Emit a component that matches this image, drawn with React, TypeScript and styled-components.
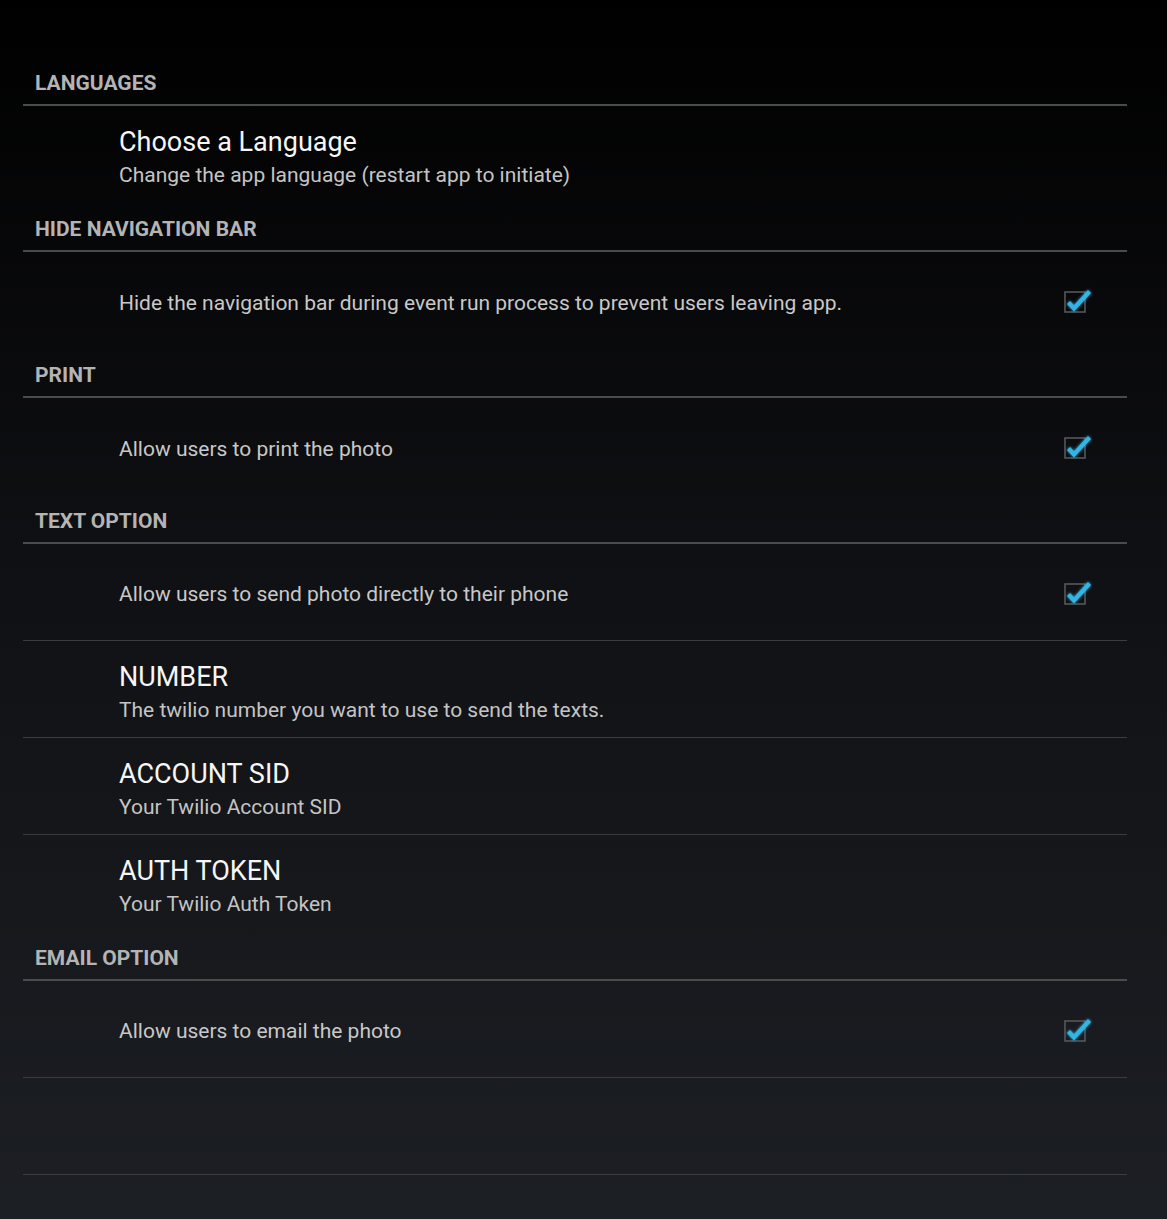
import React from 'react';
import styled, { createGlobalStyle } from 'styled-components';

const GlobalStyle = createGlobalStyle`
  html, body {
    margin: 0;
    padding: 0;
  }
  body {
    min-height: 1219px;
    background: linear-gradient(to bottom, #000000 0%, #0f1013 45%, #1c1f24 100%);
    font-family: Roboto, "Noto Sans", "Liberation Sans", sans-serif;
    -webkit-font-smoothing: antialiased;
  }
`;

const Screen = styled.div`
  min-height: 1219px;
  padding: 57px 40px 0 23px;
  box-sizing: border-box;
`;

const CategoryHeader = styled.div`
  height: 49px;
  padding: 14px 0 0 12px;
  box-sizing: border-box;
  border-bottom: 2px solid #4a4b4d;
  font-size: 21px;
  line-height: 24px;
  font-weight: 700;
  color: #b4b4b4;
`;

const Row = styled.div<{ $divider: boolean }>`
  height: 97px;
  box-sizing: border-box;
  display: flex;
  align-items: center;
  padding: 0 33px 0 96px;
  border-bottom: ${props => (props.$divider ? '1px solid #393c41' : 'none')};
`;

const TextBlock = styled.div`
  flex: 1;
  align-self: flex-start;
  padding-top: 19px;
`;

const Title = styled.div`
  font-size: 27px;
  line-height: 34px;
  color: #f6f6f6;
`;

const Summary = styled.div`
  font-size: 21px;
  line-height: 32px;
  color: #c4c4c4;
`;

const SingleText = styled.div`
  flex: 1;
  font-size: 21px;
  line-height: 28px;
  padding-top: 4px;
  color: #c8c8c8;
`;

const CheckSvg = styled.svg`
  flex-shrink: 0;
  display: block;
  margin-top: -1px;
`;

const CheckBox = () => (
  <CheckSvg width="34" height="30" viewBox="0 0 34 30">
    <defs>
      <filter id="glow" x="-30%" y="-30%" width="160%" height="160%">
        <feGaussianBlur stdDeviation="1.6" result="b" />
        <feMerge>
          <feMergeNode in="b" />
          <feMergeNode in="SourceGraphic" />
        </feMerge>
      </filter>
    </defs>
    <rect x="5" y="7" width="20" height="20" fill="none" stroke="#55575a" strokeWidth="1.6" />
    <path
      d="M8.5 17.5 L14 23.5 L29.5 6.5"
      fill="none"
      stroke="#33b5e5"
      strokeWidth="4.2"
      strokeLinejoin="miter"
      filter="url(#glow)"
    />
  </CheckSvg>
);

const Spacer = styled.div`
  height: 97px;
  box-sizing: border-box;
  border-bottom: 1px solid #393c41;
`;

type Item =
  | { kind: 'text'; title: string; summary: string }
  | { kind: 'check'; text: string };

const sections: { header: string; items: Item[] }[] = [
  {
    header: 'LANGUAGES',
    items: [{ kind: 'text', title: 'Choose a Language', summary: 'Change the app language (restart app to initiate)' }],
  },
  {
    header: 'HIDE NAVIGATION BAR',
    items: [{ kind: 'check', text: 'Hide the navigation bar during event run process to prevent users leaving app.' }],
  },
  {
    header: 'PRINT',
    items: [{ kind: 'check', text: 'Allow users to print the photo' }],
  },
  {
    header: 'TEXT OPTION',
    items: [
      { kind: 'check', text: 'Allow users to send photo directly to their phone' },
      { kind: 'text', title: 'NUMBER', summary: 'The twilio number you want to use to send the texts.' },
      { kind: 'text', title: 'ACCOUNT SID', summary: 'Your Twilio Account SID' },
      { kind: 'text', title: 'AUTH TOKEN', summary: 'Your Twilio Auth Token' },
    ],
  },
  {
    header: 'EMAIL OPTION',
    items: [{ kind: 'check', text: 'Allow users to email the photo' }],
  },
];

const App: React.FC = () => {
  return (
    <>
      <GlobalStyle />
      <Screen>
        {sections.map((section, si) => {
          const isLastSection = si === sections.length - 1;
          return (
            <React.Fragment key={section.header}>
              <CategoryHeader>{section.header}</CategoryHeader>
              {section.items.map((item, ii) => {
                const divider = ii < section.items.length - 1 || isLastSection;
                if (item.kind === 'check') {
                  return (
                    <Row key={ii} $divider={divider}>
                      <SingleText>{item.text}</SingleText>
                      <CheckBox />
                    </Row>
                  );
                }
                return (
                  <Row key={ii} $divider={divider}>
                    <TextBlock>
                      <Title>{item.title}</Title>
                      <Summary>{item.summary}</Summary>
                    </TextBlock>
                  </Row>
                );
              })}
            </React.Fragment>
          );
        })}
        <Spacer />
      </Screen>
    </>
  );
};

export default App;
